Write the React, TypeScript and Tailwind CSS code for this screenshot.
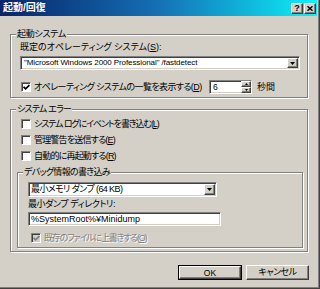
import React from "react";

const raised =
  "border border-t-white border-l-white border-b-[#404040] border-r-[#404040] shadow-[inset_-1px_-1px_0_#808080] bg-[#d4d0c8]";
const sunken =
  "border border-t-[#808080] border-l-[#808080] border-b-white border-r-white shadow-[inset_1px_1px_0_#404040,inset_-1px_-1px_0_#d4d0c8]";

function Check({ checked, disabled }: { checked?: boolean; disabled?: boolean }) {
  return (
    <span
      className={`relative block w-[10px] h-[10px] shrink-0 border border-t-[#808080] border-l-[#808080] border-b-white border-r-white shadow-[inset_1px_1px_0_#404040] ${
        disabled ? "bg-[#d4d0c8]" : "bg-white"
      }`}
    >
      {checked && (
        <svg className="absolute left-[1px] top-[1px]" width="7" height="7" viewBox="0 0 7 7">
          <path
            d="M0.6 2.8 L2.6 4.9 L6.4 1.1"
            fill="none"
            stroke={disabled ? "#808080" : "#000"}
            strokeWidth="1.7"
          />
        </svg>
      )}
    </span>
  );
}

function Arrow() {
  return (
    <svg width="5" height="3" viewBox="0 0 5 3">
      <path d="M0 0 H5 L2.5 3 Z" fill="#000" />
    </svg>
  );
}

function Group({
  label,
  labelClass,
  className,
  children,
}: {
  label: string;
  labelClass?: string;
  className: string;
  children: React.ReactNode;
}) {
  return (
    <div className={`relative border border-[#808080] shadow-[inset_1px_1px_0_#fff,1px_1px_0_#fff] ${className}`}>
      <span
        className={`absolute left-[5px] top-[-7px] bg-[#d4d0c8] px-[1px] leading-[12px] whitespace-nowrap ${labelClass ?? ""}`}
      >
        {label}
      </span>
      {children}
    </div>
  );
}

function U({ c }: { c: string }) {
  return <span className="underline underline-offset-[1px] decoration-[0.5px]">{c}</span>;
}

export default function App() {
  return (
    <div className="w-[320px] h-[289px] border-r border-b border-r-[#404040] border-b-[#404040] bg-[#d4d0c8] font-['Liberation_Sans','Noto_Sans_CJK_JP',sans-serif] [font-feature-settings:'palt'] text-[9px] text-black overflow-hidden">
      <div className="w-[319px] h-[288px] border-r border-b border-r-[#808080] border-b-[#808080]">
        <div className="w-[317px] flex flex-col">
          {/* Title bar */}
          <div className="h-[16px] flex items-center bg-linear-to-r from-[#0a246a] via-[#1670b4] to-[#10f0f8] pl-[3px] pr-[1px]">
            <span className="text-white font-bold text-[10px] leading-[12px] flex-1">起動/回復</span>
            <div className={`w-[12px] h-[11px] flex items-center justify-center ${raised}`}>
              <span className="font-bold text-[9px] leading-[9px] font-['Liberation_Sans',sans-serif]">?</span>
            </div>
            <div className={`ml-[1px] w-[12px] h-[11px] flex items-center justify-center ${raised}`}>
              <svg width="6" height="5" viewBox="0 0 6 5">
                <path d="M0.5 0.3 L5.5 4.7 M5.5 0.3 L0.5 4.7" stroke="#000" strokeWidth="1.4" />
              </svg>
            </div>
          </div>

          {/* Group 1 */}
          <Group label="起動システム" labelClass="tracking-[-0.3px]" className="mt-[18px] ml-[10px] w-[298px] h-[64px]">
            <div className="mt-[6px] ml-[9px] leading-[12px] whitespace-nowrap">
              既定のオペレーティング システム(<U c="S" />):
            </div>
            <div className={`mt-[3px] ml-[9px] w-[280px] h-[14px] bg-white flex items-center ${sunken}`}>
              <span className="flex-1 pl-[3px] text-[8px] tracking-[-0.1px] leading-[10px] whitespace-nowrap overflow-hidden">
                "Microsoft Windows 2000 Professional" /fastdetect
              </span>
              <div className={`w-[11px] h-[10px] mr-[1px] flex items-center justify-center ${raised}`}>
                <Arrow />
              </div>
            </div>
            <div className="mt-[10px] h-[14px] flex items-center">
              <div className="w-[198px] pl-[10px] flex items-center">
                <Check checked />
                <span className="ml-[3px] leading-[12px] whitespace-nowrap tracking-[-0.6px]">
                  オペレーティング システムの一覧を表示する(<U c="D" />)
                </span>
              </div>
              <div className={`w-[43px] h-[14px] bg-white flex items-center ${sunken}`}>
                <span className="flex-1 pl-[3px] text-[8.5px] leading-[10px]">6</span>
                <div className="w-[10px] h-[12px] flex flex-col">
                  <div className={`h-[6px] flex items-center justify-center ${raised}`}>
                    <svg width="3" height="2" viewBox="0 0 3 2">
                      <path d="M0 2 H3 L1.5 0 Z" fill="#000" />
                    </svg>
                  </div>
                  <div className={`h-[6px] flex items-center justify-center ${raised}`}>
                    <svg width="3" height="2" viewBox="0 0 3 2">
                      <path d="M0 0 H3 L1.5 2 Z" fill="#000" />
                    </svg>
                  </div>
                </div>
              </div>
              <span className="ml-[5px] leading-[12px]">秒間</span>
            </div>
          </Group>

          {/* Group 2 */}
          <Group label="システム エラー" labelClass="tracking-[-0.8px]" className="mt-[11px] ml-[10px] w-[298px] h-[143px]">
            <div className="mt-[8px] h-[12px] pl-[10px] flex items-center">
              <Check />
              <span className="ml-[3px] leading-[12px] whitespace-nowrap tracking-[-1.1px]">
                システム ログにイベントを書き込む(<U c="L" />)
              </span>
            </div>
            <div className="mt-[4px] h-[12px] pl-[10px] flex items-center">
              <Check />
              <span className="ml-[3px] leading-[12px] whitespace-nowrap tracking-[-0.8px]">
                管理警告を送信する(<U c="E" />)
              </span>
            </div>
            <div className="mt-[4px] h-[12px] pl-[10px] flex items-center">
              <Check />
              <span className="ml-[3px] leading-[12px] whitespace-nowrap tracking-[-0.8px]">
                自動的に再起動する(<U c="R" />)
              </span>
            </div>

            <Group
              label="デバッグ情報の書き込み"
              labelClass="tracking-[-0.7px]"
              className="mt-[10px] ml-[6px] w-[286px] h-[76px]"
            >
              <div className={`mt-[9px] ml-[10px] w-[189px] h-[15px] bg-white flex items-center ${sunken}`}>
                <span className="flex-1 pl-[2px] tracking-[-0.6px] leading-[11px] whitespace-nowrap">
                  最小メモリ ダンプ (64 KB)
                </span>
                <div className={`w-[11px] h-[11px] mr-[1px] flex items-center justify-center ${raised}`}>
                  <Arrow />
                </div>
              </div>
              <div className="mt-[1px] ml-[10px] leading-[12px] whitespace-nowrap tracking-[-0.4px]">
                最小ダンプ ディレクトリ:
              </div>
              <div className={`mt-[2px] ml-[10px] w-[193px] h-[14px] bg-white flex items-center ${sunken}`}>
                <span className="pl-[2px] text-[9px] leading-[10px] whitespace-nowrap">%SystemRoot%¥Minidump</span>
              </div>
              <div className="mt-[6px] ml-[13px] h-[12px] flex items-center">
                <Check checked disabled />
                <span className="ml-[3px] leading-[12px] whitespace-nowrap tracking-[-1.2px] text-[#808080] [text-shadow:1px_1px_0_#fff]">
                  既存のファイルに上書きする(<U c="O" />)
                </span>
              </div>
            </Group>
          </Group>

          {/* Buttons */}
          <div className="mt-[13px] flex justify-end gap-[4px] pr-[8px]">
            <div className="w-[64px] h-[15px] border border-black">
              <div className={`w-full h-full flex items-center justify-center ${raised}`}>
                <span className="text-[8.5px] leading-[10px]">OK</span>
              </div>
            </div>
            <div className={`w-[63px] h-[15px] flex items-center justify-center ${raised}`}>
              <span className="leading-[11px] tracking-[-0.5px]">キャンセル</span>
            </div>
          </div>
        </div>
      </div>
    </div>
  );
}
